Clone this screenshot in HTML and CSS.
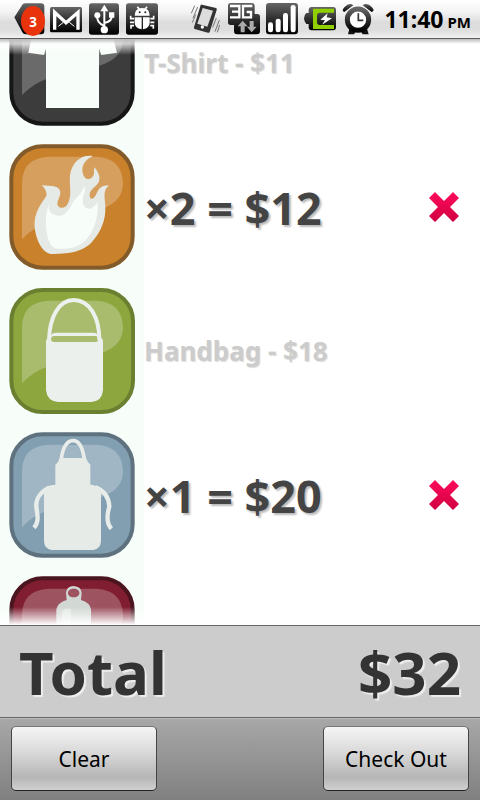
FILE: index.html
```html
<!DOCTYPE html>
<html lang="en">
<head>
<meta charset="utf-8">
<title>Checkout</title>
<link rel="stylesheet" href="styles.css">
</head>
<body>
<svg class="defs" width="0" height="0">
  <defs>
    <linearGradient id="dark" x2="0" y2="1"><stop stop-color="#666"/><stop offset=".55" stop-color="#2a2a2a"/><stop offset="1" stop-color="#000"/></linearGradient>
    <linearGradient id="red" x2="0" y2="1"><stop stop-color="#ff0a5c"/><stop offset="1" stop-color="#cf0040"/></linearGradient>
    <path id="gloss" d="M66 310V140Q68 66 145 62H290Q365 66 369 140C369 185 340 208 298 221C240 237 125 243 66 310Z" fill="#fff" fill-opacity=".24"/>
    <path id="cross" d="M0 6L6 0L15 9L24 0L30 6L21 15L30 24L24 30L15 21L6 30L0 24L9 15Z"/>
  </defs>
</svg>
<main class="screen">
  <header class="status">
    <svg class="status-icons" viewBox="0 0 1140 114" width="380" height="38">
      <path d="M43 52L68 13Q71 10 77 10H123Q133 10 133 20V94Q133 103 123 103H77Q70 103 67 97Z" fill="url(#dark)"/>
      <ellipse cx="99" cy="63" rx="36" ry="45" fill="#e9330c"/>
      <text x="99" y="81" class="badge">3</text>
      <rect x="150" y="21" width="96" height="76" rx="5" fill="url(#dark)"/>
      <path d="M164 89V37L198 68L234 37V89" fill="none" stroke="#fff" stroke-width="10"/>
      <path d="M175 79L190 67M223 79L208 67" stroke="#fff" stroke-width="3"/>
      <rect x="267" y="10" width="90" height="94" rx="8" fill="url(#dark)"/>
      <g fill="none" stroke="#fff" stroke-width="6"><path d="M313 90V28M313 78Q289 68 292 48M313 69Q338 63 335 47"/></g>
      <path d="M313 14L325 34H301ZM327 37H343V53H327Z" fill="#fff"/><circle cx="292" cy="46" r="9" fill="#fff"/><circle cx="313" cy="89" r="11" fill="#fff"/>
      <rect x="378" y="10" width="96" height="94" rx="8" fill="url(#dark)"/>
      <path d="M404 47Q404 24 427 24Q449 24 449 47ZM404 52H425V88Q404 84 404 68ZM429 52H449V68Q449 84 429 88Z" fill="#fff"/>
      <path d="M412 20L418 28M441 20L435 28M402 56H392V47M402 67H390M402 77H393V86M451 56H461V47M451 67H463M451 77H460V86" fill="none" stroke="#fff" stroke-width="5"/>
      <circle cx="419" cy="37" r="3" fill="#222"/><circle cx="436" cy="37" r="3" fill="#222"/>

      <g transform="translate(540 0)">
        <path d="M62 15Q63 13 66 14L108 24Q112 25 110 30L89 96Q88 99 84 98L44 87Q41 86 42 82Z" fill="#333"/>
        <path d="M68 24L99 32L82 80L52 71Z" fill="#ddd"/><circle cx="67" cy="81" r="5" fill="#fff"/>
        <path d="M44 17L34 40M53 21L39 54M47 44L37 68M118 60L105 95M109 54L98 82M119 75L112 97" stroke="#777" stroke-width="3"/>
        <path d="M152 9H215Q224 9 224 18V42H232Q240 42 240 50V94Q240 103 231 103H171Q162 103 162 94V75H152Q144 75 144 67V17Q144 9 152 9Z" fill="url(#dark)"/>
        <path d="M150 18H178V52H150M156 35H178M217 18H189V52H213V36H200" fill="none" stroke="#fff" stroke-width="7"/>
        <path d="M188 62L203 79H194V97H182V79H173ZM215 97L230 80H221V63H209V80H201Z" fill="#aaa"/>
        <rect x="258" y="9" width="96" height="94" rx="9" fill="url(#dark)"/>
        <g fill="#fff"><rect x="264" y="67" width="15" height="30" rx="7"/><rect x="287" y="56" width="15" height="41" rx="7"/><rect x="309" y="39" width="15" height="58" rx="7"/><rect x="332" y="15" width="15" height="82" rx="7"/></g>
        <path d="M395 21H459Q468 21 468 30V82Q468 91 459 91H395Q386 91 386 82V72H379Q372 65 372 55Q372 45 379 39H386V30Q386 21 395 21Z" fill="url(#dark)"/>
        <path d="M399 26H462V38H420Q411 38 411 48V66Q411 75 420 75H462V87H399Z" fill="#91d000"/>
        <path d="M443 40L421 59L435 61L426 74L456 55L440 52Z" fill="#fff"/>
        <path d="M493 36Q483 33 493 22Q508 5 520 16ZM575 36Q586 33 576 22Q561 5 548 16Z" fill="url(#dark)"/>
        <path d="M508 86L504 103H522L527 95M561 86L566 103H548L543 95" fill="#111"/>
        <circle cx="534" cy="59" r="32" fill="#fff" stroke="url(#dark)" stroke-width="15"/>
        <path d="M535 40V61H550" fill="none" stroke="#333" stroke-width="5"/>
      </g>
    </svg>
    <div class="clock"><span class="time">11:40</span><span class="pm">PM</span></div>
  </header>

  <section class="list">
    <div class="row">
      <svg class="tile" viewBox="0 -3 432 432">
        <rect x="34" y="31" width="364" height="364" rx="94" fill="#3c3c3c" stroke="#161616" stroke-width="12"/>
        <use href="#gloss"/>
        <path d="M137 75L115 85L96 130L85 182L132 189L138 169V348H297V169L304 189L351 182L338 130L320 85L297 75Z" fill="#f7fdf9"/>
      </svg>
      <div class="name">T-Shirt - $11</div>
    </div>
    <div class="row">
      <svg class="tile" viewBox="0 -3 432 432">
        <rect x="34" y="31" width="364" height="364" rx="94" fill="#c9812b" stroke="#835a29" stroke-width="12"/>
        <use href="#gloss"/>
        <path d="M125 147C148 151 180 146 181 170C180 187 168 196 174 209C181 219 197 216 203 204C219 174 205 145 211 112C218 78 244 54 279 60C255 71 244 88 248 111C252 130 267 135 278 122C286 112 279 106 284 94C293 107 303 122 296 139C287 155 268 160 269 178C270 194 281 190 287 178C294 162 302 144 327 149C307 162 315 187 316 211C318 250 304 288 273 321C240 354 188 353 151 354C125 347 109 313 104 276C100 230 124 203 139 180C142 169 135 158 125 147Z" fill="#e5eae6"/>
        <path d="M146 205C144 231 160 241 184 239C210 230 211 202 231 184C246 169 249 160 252 150C263 169 239 183 252 210C265 227 284 215 292 197C296 235 286 277 262 307C237 336 203 342 164 337C144 324 138 291 138 258C137 235 142 220 146 205Z" fill="#f7fdf9"/>
      </svg>
      <div class="sum">×2 = $12</div>
      <svg class="remove" viewBox="0 0 30 30"><use href="#cross" fill="url(#red)"/></svg>
    </div>
    <div class="row">
      <svg class="tile" viewBox="0 -3 432 432">
        <rect x="34" y="30" width="365" height="366" rx="94" fill="#8ea63e" stroke="#6b7f30" stroke-width="12"/>
        <use href="#gloss"/>
        <path d="M147 180C149 112 176 60 221 60C269 60 298 112 298 180" fill="none" stroke="#ecf1ed" stroke-width="12"/>
        <path fill-rule="evenodd" d="M153 169Q153 158 169 158H278Q294 158 296 169L304 174Q309 177 309 184V330Q307 363 274 366H174Q141 363 138 330V184Q138 177 145 175ZM163 168Q153 168 153 177Q153 186 163 186H285Q295 186 295 177Q295 168 285 168Z" fill="#ebf0ed"/>
      </svg>
      <div class="name">Handbag - $18</div>
    </div>
    <div class="row">
      <svg class="tile" viewBox="0 -3 432 432">
        <rect x="34" y="31" width="364" height="364" rx="94" fill="#829fb2" stroke="#5d717e" stroke-width="12"/>
        <use href="#gloss"/>
        <path d="M184 106C187 75 199 50 219 50C239 50 249 77 253 106" fill="none" stroke="#e8edea" stroke-width="11"/>
        <path d="M148 190C116 207 107 225 109 250C114 278 116 296 102 311M286 190C320 203 327 226 328 248C319 278 321 300 334 314" fill="none" stroke="#e8edea" stroke-width="13"/>
        <path d="M179 102H258Q263 115 271 122V182Q287 181 303 198V352Q302 374 280 378H155Q133 375 132 352V204Q137 182 166 182V122Q176 115 179 102Z" fill="#e6ebe7"/>
      </svg>
      <div class="sum">×1 = $20</div>
      <svg class="remove" viewBox="0 0 30 30"><use href="#cross" fill="url(#red)"/></svg>
    </div>
    <div class="row">
      <svg class="tile" viewBox="0 -3 432 432">
        <rect x="34" y="31" width="364" height="364" rx="94" fill="#801d30" stroke="#4a151f" stroke-width="12"/>
        <use href="#gloss"/>
        <path fill-rule="evenodd" d="M198 75Q200 54 221 54Q244 56 245 75L243 96Q270 104 273 124V340H169V124Q173 104 200 96ZM221 62C198 62 198 88 221 88C244 88 244 62 221 62Z" fill="#d2d8d3"/>
        <path d="M187 340V130Q190 122 200 122H213V340Z" fill="#e3e8e4"/>
      </svg>
    </div>
    <div class="fade fade-top"></div>
    <div class="fade fade-bottom"></div>
  </section>

  <section class="total"><span class="total-label">Total</span><span class="total-value">$32</span></section>
  <footer class="actions"><button><span>Clear</span></button><button><span>Check Out</span></button></footer>
</main>
</body>
</html>
```

FILE: styles.css
```css
* { box-sizing: border-box; }
body { margin: 0; font-family: "Noto Sans", "Open Sans", sans-serif; background: #fff; }
.defs { display: block; position: absolute; }
.screen { width: 480px; height: 800px; display: flex; flex-direction: column; overflow: hidden; }

.status { height: 39px; flex: none; display: flex; justify-content: space-between; border-bottom: 1px solid #5d5d5d; background: linear-gradient(#fff 0, #f4f4f4 30%, #dcdcdc 60%, #dedede 80%, #f0f0f0 100%); }
.status-icons { flex: none; }
.badge { font: bold 40px "Noto Sans", sans-serif; fill: #fff; text-anchor: middle; }
.clock { display: flex; align-items: baseline; gap: 4px; padding-right: 9px; font-weight: bold; color: #000; white-space: nowrap; }
.time { font-size: 23px; line-height: 39px; }
.pm { font-size: 15px; }

.list { position: relative; height: 586px; flex: none; overflow: hidden; background: linear-gradient(90deg, #f7fdf9 144px, #fff 144px); }
.row { height: 144px; display: flex; align-items: center; }
.row:first-child { margin-top: -48px; }
.tile { width: 144px; height: 144px; flex: none; }
.name { font-size: 26px; font-weight: bold; color: #ccc; text-shadow: 1px 1px 1px #ddd; white-space: nowrap; }
.sum { flex: 1; font-size: 45px; font-weight: bold; color: #444; text-shadow: 2px 2px 2px #bbb; white-space: nowrap; }
.remove { width: 30px; height: 30px; margin-right: 21px; }
.fade { position: absolute; left: 0; right: 0; height: 16px; }
.fade-top { top: 0; background: linear-gradient(#bbb, rgba(255,255,255,.75) 30%, rgba(255,255,255,0)); }
.fade-bottom { bottom: 0; height: 18px; background: linear-gradient(rgba(255,255,255,0), #fff); }

.total { height: 92px; flex: none; display: flex; justify-content: space-between; align-items: center; padding: 0 19px; border-top: 1px solid #666; background: #ccc; font-size: 60px; line-height: 60px; font-weight: bold; color: #333; text-shadow: 2px 2px 1px #eee; }
.actions { height: 83px; flex: none; display: flex; justify-content: space-between; align-items: flex-start; padding: 8px 11px 0; border-top: 1px solid #666; background: linear-gradient(#a8a8a8, #808080); box-shadow: inset 0 1px #bbb; }
button { width: 146px; height: 65px; padding: 0; border: 1px solid; border-color: #777 #444 #222; border-radius: 5px; background: linear-gradient(#f5f5f5, #d9d9d9 40%, #b6b6b6 80%, #d0d0d0); font: 21px "Noto Sans", sans-serif; color: #000; }
```
